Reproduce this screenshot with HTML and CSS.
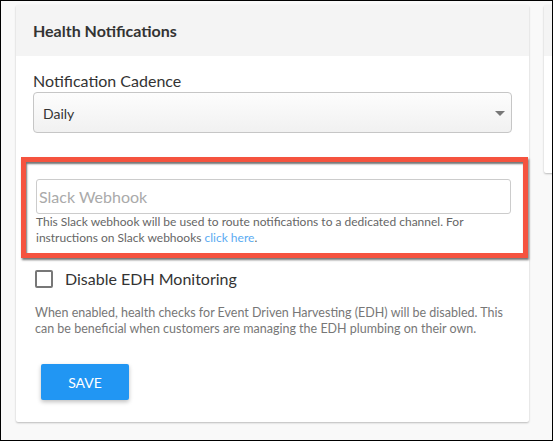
FILE: index.html
```html
<!DOCTYPE html>
<html lang="en">
<head>
  <meta charset="UTF-8">
  <meta name="viewport" content="width=device-width, initial-scale=1.0">
  <title>Health Notifications</title>
  <link rel="stylesheet" href="styles.css">
</head>
<body>
  <div class="frame">
    <div class="card">
      <div class="card-header">Health Notifications</div>
      <div class="card-body">
        <label class="field-label" for="cadence">Notification Cadence</label>
        <div class="select">
          <span id="cadence">Daily</span>
          <span class="caret"></span>
        </div>

        <div class="highlight">
          <input type="text" class="text-input" placeholder="Slack Webhook">
          <p class="help">This Slack webhook will be used to route notifications to a dedicated channel. For instructions on Slack webhooks <a href="#">click here</a>.</p>
        </div>

        <div class="check-row">
          <span class="checkbox"></span>
          <span class="check-label">Disable EDH Monitoring</span>
        </div>
        <p class="description">When enabled, health checks for Event Driven Harvesting (EDH) will be disabled. This can be beneficial when customers are managing the EDH plumbing on their own.</p>

        <button class="save-btn">Save</button>
      </div>
    </div>

    <div class="card side-card">
      <div class="card-header"></div>
    </div>
  </div>
</body>
</html>
```

FILE: styles.css
```css
html, body {
  margin: 0;
  padding: 0;
}
body {
  font-family: 'Lato', 'Open Sans', sans-serif;
  color: #333;
}
.frame {
  width: 553px;
  height: 441px;
  box-sizing: border-box;
  border: 1px solid #000;
  background: #f9f9f9;
  overflow: hidden;
  display: flex;
  align-items: flex-start;
  gap: 15px;
  padding: 4px 0 0 15px;
}
.card {
  flex: 0 0 513px;
  background: #fff;
  border-radius: 2px;
  box-shadow: 0 1px 2px rgba(0, 0, 0, 0.25);
}
.card-header {
  height: 51px;
  box-sizing: border-box;
  padding: 16px 17px 0;
  background: #f4f4f4;
  font-size: 16px;
  font-weight: 700;
  line-height: 20px;
  color: #333;
}
.card-body {
  padding: 15px 17px 22px;
}
.field-label {
  display: block;
  font-size: 16px;
  line-height: 20px;
  margin-bottom: 1px;
}
.select {
  height: 41px;
  box-sizing: border-box;
  border: 1px solid #c6c6c6;
  border-radius: 4px;
  background: linear-gradient(#fdfdfd, #f1f1f1);
  display: flex;
  align-items: center;
  justify-content: space-between;
  padding: 2px 6px 0 9px;
  font-size: 14px;
}
.caret {
  width: 0;
  height: 0;
  border-left: 5px solid transparent;
  border-right: 5px solid transparent;
  border-top: 5px solid #777;
  margin-top: -1px;
}
.highlight {
  margin: 24px -16px 0 -12px;
  border: 5px solid #f5533f;
  padding: 17px 12px 7px 10px;
  box-shadow: 1px 2px 2px rgba(0, 0, 0, 0.55), inset 1px 2px 2px rgba(0, 0, 0, 0.55);
}
.text-input {
  display: block;
  width: 100%;
  height: 35px;
  box-sizing: border-box;
  border: 1px solid #ccc;
  border-radius: 3px;
  padding: 0 2px;
  font-family: inherit;
  font-size: 16px;
  color: #333;
  outline: none;
}
.text-input::placeholder {
  color: #aaa;
}
.help {
  margin: 0;
  font-size: 12px;
  line-height: 16px;
  color: #666;
}
.help a {
  color: #5aabf2;
  text-decoration: none;
}
.check-row {
  display: flex;
  align-items: center;
  gap: 12px;
  height: 20px;
  margin: 11px 0 0 2px;
}
.checkbox {
  width: 18px;
  height: 18px;
  box-sizing: border-box;
  border: 2px solid #777;
  border-radius: 2px;
}
.check-label {
  font-size: 16px;
  line-height: 20px;
}
.description {
  margin: 16px 0 0 2px;
  font-size: 12.5px;
  line-height: 16px;
  color: #777;
}
.save-btn {
  display: block;
  margin: 27px 0 0 8px;
  width: 88px;
  height: 36px;
  border: none;
  border-radius: 2px;
  background: #2196f3;
  color: #fff;
  font-family: inherit;
  font-size: 14px;
  text-transform: uppercase;
  box-shadow: 0 2px 4px rgba(0, 0, 0, 0.25);
  cursor: pointer;
}
.side-card {
  flex: 0 0 300px;
  height: 168px;
}
```
